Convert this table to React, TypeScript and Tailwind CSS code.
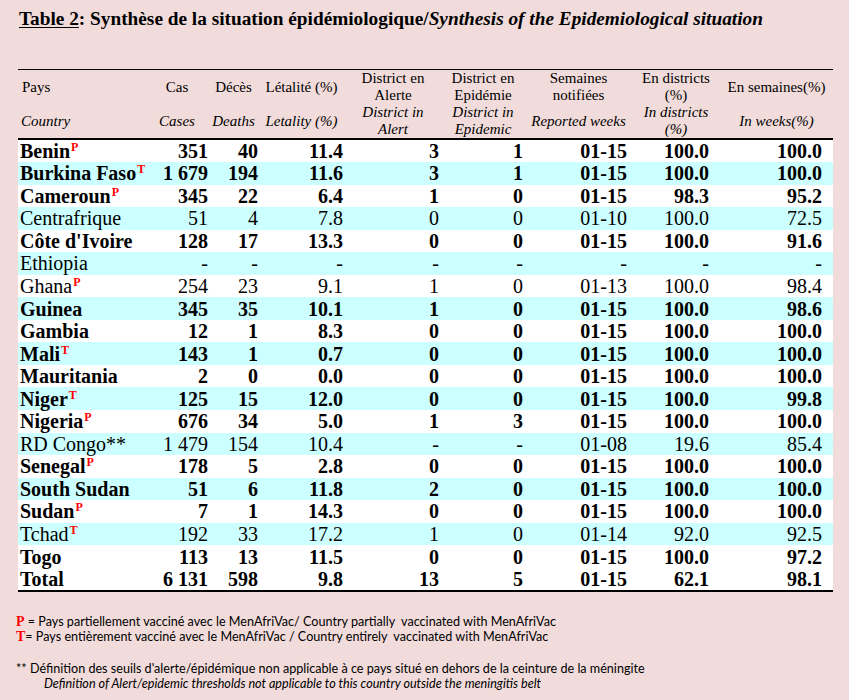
import React from "react";

type Row = {
  country: string;
  sup?: "P" | "T";
  bold: boolean;
  values: string[];
};

const rows: Row[] = [
  { country: "Benin", sup: "P", bold: true, values: ["351", "40", "11.4", "3", "1", "01-15", "100.0", "100.0"] },
  { country: "Burkina Faso", sup: "T", bold: true, values: ["1 679", "194", "11.6", "3", "1", "01-15", "100.0", "100.0"] },
  { country: "Cameroun", sup: "P", bold: true, values: ["345", "22", "6.4", "1", "0", "01-15", "98.3", "95.2"] },
  { country: "Centrafrique", bold: false, values: ["51", "4", "7.8", "0", "0", "01-10", "100.0", "72.5"] },
  { country: "Côte d'Ivoire", bold: true, values: ["128", "17", "13.3", "0", "0", "01-15", "100.0", "91.6"] },
  { country: "Ethiopia", bold: false, values: ["-", "-", "-", "-", "-", "-", "-", "-"] },
  { country: "Ghana", sup: "P", bold: false, values: ["254", "23", "9.1", "1", "0", "01-13", "100.0", "98.4"] },
  { country: "Guinea", bold: true, values: ["345", "35", "10.1", "1", "0", "01-15", "100.0", "98.6"] },
  { country: "Gambia", bold: true, values: ["12", "1", "8.3", "0", "0", "01-15", "100.0", "100.0"] },
  { country: "Mali", sup: "T", bold: true, values: ["143", "1", "0.7", "0", "0", "01-15", "100.0", "100.0"] },
  { country: "Mauritania", bold: true, values: ["2", "0", "0.0", "0", "0", "01-15", "100.0", "100.0"] },
  { country: "Niger", sup: "T", bold: true, values: ["125", "15", "12.0", "0", "0", "01-15", "100.0", "99.8"] },
  { country: "Nigeria", sup: "P", bold: true, values: ["676", "34", "5.0", "1", "3", "01-15", "100.0", "100.0"] },
  { country: "RD Congo**", bold: false, values: ["1 479", "154", "10.4", "-", "-", "01-08", "19.6", "85.4"] },
  { country: "Senegal", sup: "P", bold: true, values: ["178", "5", "2.8", "0", "0", "01-15", "100.0", "100.0"] },
  { country: "South Sudan", bold: true, values: ["51", "6", "11.8", "2", "0", "01-15", "100.0", "100.0"] },
  { country: "Sudan", sup: "P", bold: true, values: ["7", "1", "14.3", "0", "0", "01-15", "100.0", "100.0"] },
  { country: "Tchad", sup: "T", bold: false, values: ["192", "33", "17.2", "1", "0", "01-14", "92.0", "92.5"] },
  { country: "Togo", bold: true, values: ["113", "13", "11.5", "0", "0", "01-15", "100.0", "97.2"] },
  { country: "Total", bold: true, values: ["6 131", "598", "9.8", "13", "5", "01-15", "62.1", "98.1"] },
];

// right padding per value column, so numbers line up like the original sheet
const valuePad = ["pr-[1px]", "pr-0", "pr-[2px]", "pr-[2px]", "pr-[2px]", "pr-[5px]", "pr-[11px]", "pr-[11px]"];

const serif = "font-['Liberation_Serif',serif]";

const HeadTop = ({ children, className = "" }: { children: React.ReactNode; className?: string }) => (
  <th className={`h-[34px] p-0 align-middle text-center font-normal leading-[17px] border-t-[1.5px] border-black ${className}`}>
    {children}
  </th>
);

const HeadBottom = ({ children, className = "" }: { children: React.ReactNode; className?: string }) => (
  <th className={`h-[34px] p-0 align-middle text-center font-normal italic leading-[17px] border-b-2 border-black ${className}`}>
    {children}
  </th>
);

export default function App() {
  return (
    <div className="w-[849px] h-[700px] bg-[#f2dcdb] overflow-hidden text-black">
      {/* Title */}
      <div className={`${serif} pl-[19px] pt-[7px] h-[31px] text-[19.3px] leading-[24px] font-bold whitespace-nowrap`}>
        <span className="underline underline-offset-2">Table 2</span>
        <span>: Synthèse de la situation épidémiologique/</span>
        <span className="italic">Synthesis of the Epidemiological situation</span>
      </div>

      {/* Table */}
      <table className={`${serif} ml-[18px] mt-[38px] w-[815px] table-fixed border-collapse`}>
        <colgroup>
          <col className="w-[127px]" />
          <col className="w-[64px]" />
          <col className="w-[49px]" />
          <col className="w-[87px]" />
          <col className="w-[96px]" />
          <col className="w-[84px]" />
          <col className="w-[107px]" />
          <col className="w-[88px]" />
          <col className="w-[113px]" />
        </colgroup>
        <thead className="text-[15px]">
          <tr>
            <HeadTop className="text-left pl-[4px]">Pays</HeadTop>
            <HeadTop>Cas</HeadTop>
            <HeadTop>Décès</HeadTop>
            <HeadTop>Létalité (%)</HeadTop>
            <HeadTop>District en<br />Alerte</HeadTop>
            <HeadTop>District en<br />Epidémie</HeadTop>
            <HeadTop>Semaines<br />notifiées</HeadTop>
            <HeadTop>En districts<br />(%)</HeadTop>
            <HeadTop>En semaines(%)</HeadTop>
          </tr>
          <tr>
            <HeadBottom className="text-left pl-[3px]">Country</HeadBottom>
            <HeadBottom>Cases</HeadBottom>
            <HeadBottom>Deaths</HeadBottom>
            <HeadBottom>Letality (%)</HeadBottom>
            <HeadBottom>District in<br />Alert</HeadBottom>
            <HeadBottom>District in<br />Epidemic</HeadBottom>
            <HeadBottom>Reported weeks</HeadBottom>
            <HeadBottom>In districts<br />(%)</HeadBottom>
            <HeadBottom>In weeks(%)</HeadBottom>
          </tr>
        </thead>
        <tbody className="text-[20px]">
          {rows.map((row, i) => {
            const isTotal = row.country === "Total";
            const bg = i % 2 === 1 && !isTotal ? "bg-[#ccffff]" : "bg-white";
            const weight = row.bold ? "font-bold" : "font-normal";
            const last = isTotal ? "border-b-2 border-black" : "";
            return (
              <tr key={row.country} className={`${bg} h-[22.55px]`}>
                <td className={`p-0 pl-[2px] leading-[22px] whitespace-nowrap ${weight} ${last}`}>
                  {row.country}
                  {row.sup && (
                    <span className="text-[12px] leading-none font-bold text-[#ff0000] align-[7px] ml-[1px]">
                      {row.sup}
                    </span>
                  )}
                </td>
                {row.values.map((v, j) => (
                  <td
                    key={j}
                    className={`p-0 text-right leading-[22px] whitespace-nowrap ${valuePad[j]} ${weight} ${last}`}
                  >
                    {v}
                  </td>
                ))}
              </tr>
            );
          })}
        </tbody>
      </table>

      {/* Notes */}
      <div className="pl-[16px] pt-[22px] font-['Lato',sans-serif] text-[12.6px] leading-[15px] whitespace-nowrap">
        <div>
          <span className={`${serif} text-[14px] font-bold text-[#ff0000]`}>P</span> = Pays partiellement vacciné avec le MenAfriVac/ Country partially&nbsp; vaccinated with MenAfriVac
        </div>
        <div>
          <span className={`${serif} text-[14px] font-bold text-[#ff0000]`}>T</span>= Pays entièrement vacciné avec le MenAfriVac / Country entirely&nbsp; vaccinated with MenAfriVac
        </div>
        <div className="mt-[17px]">
          ** Définition des seuils d'alerte/épidémique non applicable à ce pays situé en dehors de la ceinture de la méningite
        </div>
        <div className="pl-[28px] italic">
          Definition of Alert/epidemic thresholds not applicable to this country outside the meningitis belt
        </div>
      </div>
    </div>
  );
}
